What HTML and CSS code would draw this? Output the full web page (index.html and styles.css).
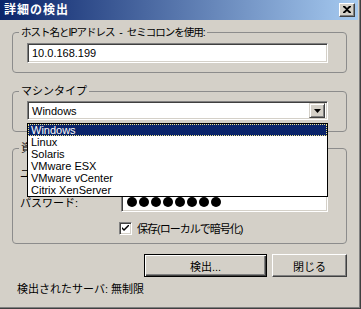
FILE: index.html
```html
<!DOCTYPE html>
<html lang="ja">
<head>
    <meta charset="UTF-8">
    <title>詳細の検出</title>
    <link rel="stylesheet" href="styles.css">
</head>
<body>
    <div class="window">
        <!-- Title bar -->
        <div class="titlebar">
            <span class="title">詳細の検出</span>
            <span class="close-btn">
                <svg width="8" height="7" viewBox="0 0 8 7"><path d="M0 0h2l2 2 2-2h2v1l-3 2.5 3 2.5v1h-2l-2-2-2 2h-2v-1l3-2.5-3-2.5z" fill="#000"/></svg>
            </span>
        </div>

        <div class="dialog-body">
            <fieldset class="group group-host">
                <legend>ホスト名とIPアドレス - セミコロンを使用:</legend>
                <div class="textbox">10.0.168.199</div>
            </fieldset>

            <fieldset class="group group-machine">
                <legend>マシンタイプ</legend>
                <div class="combo">
                    <span class="combo-value">Windows</span>
                    <span class="combo-btn">
                        <svg width="7" height="4" viewBox="0 0 7 4"><path d="M0 0h7l-3.5 4z" fill="#000"/></svg>
                    </span>
                </div>
            </fieldset>

            <fieldset class="group group-cred">
                <legend>資格情報</legend>
                <div class="field-row">
                    <span class="field-label">ユーザー名:</span>
                    <div class="textbox short"></div>
                </div>
                <div class="field-row">
                    <span class="field-label">パスワード:</span>
                    <div class="textbox short dots">
                        <span></span><span></span><span></span><span></span>
                        <span></span><span></span><span></span><span></span>
                    </div>
                </div>
                <div class="check-row">
                    <span class="checkbox">
                        <svg width="7" height="7" viewBox="0 0 7 7"><path d="M0 2l2 2 5-5v2l-5 5-2-2z" fill="#000"/></svg>
                    </span>
                    <span>保存(ローカルで暗号化)</span>
                </div>
            </fieldset>

            <div class="buttons">
                <span class="btn default">検出...</span>
                <span class="btn">閉じる</span>
            </div>

            <div class="status">検出されたサーバ: 無制限</div>

            <!-- Open combo list, drawn over the dialog -->
            <ul class="drop-list">
                <li class="selected">Windows</li>
                <li>Linux</li>
                <li>Solaris</li>
                <li>VMware ESX</li>
                <li>VMware vCenter</li>
                <li>Citrix XenServer</li>
            </ul>
        </div>
    </div>
</body>
</html>
```

FILE: styles.css
```css
body {
    margin: 0;
    padding: 0;
    font-family: "Liberation Sans", "Noto Sans CJK JP", sans-serif;
    font-size: 11px;
    color: #000;
    background: #d4d0c8;
}

.window {
    width: 361px;
    height: 309px;
    box-sizing: border-box;
    background: #d4d0c8;
    border-right: 1px solid #404040;
    border-bottom: 1px solid #404040;
    box-shadow: inset -1px -1px 0 #808080;
    display: flex;
    flex-direction: column;
}

/* Title bar */
.titlebar {
    height: 20px;
    margin-right: 2px;
    display: flex;
    align-items: center;
    justify-content: space-between;
    padding: 0 3px 0 4px;
    background: linear-gradient(to right, #0a246a, #a6caf0);
}

.title {
    color: #fff;
    font-weight: bold;
    font-size: 12px;
    letter-spacing: 1px;
    line-height: 14px;
}

.close-btn {
    width: 16px;
    height: 14px;
    box-sizing: border-box;
    background: #d4d0c8;
    border: 1px solid;
    border-color: #fff #404040 #404040 #fff;
    box-shadow: inset -1px -1px 0 #808080;
    display: flex;
    align-items: center;
    justify-content: center;
    padding-bottom: 1px;
}

.dialog-body {
    position: relative;
    flex: 1;
    padding: 6px 0 0 12px;
}

/* Group boxes */
.group {
    width: 335px;
    box-sizing: border-box;
    margin: 0;
    border: 1px solid #8c8c8c;
    border-radius: 4px;
    padding: 0 18px 0 14px;
}

.group legend {
    padding: 0 2px;
    margin-left: -8px;
    line-height: 13px;
}

.group-host {
    padding-top: 4px;
    padding-bottom: 9px;
}

.group-host legend {
    font-size: 10.5px;
    letter-spacing: -1px;
    word-spacing: 3px;
}

.group-machine {
    margin-top: 12px;
    padding-top: 3px;
    padding-bottom: 11px;
}

.group-cred {
    margin-top: 10px;
    padding-top: 4px;
    padding-bottom: 7px;
}

/* Text boxes */
.textbox {
    height: 20px;
    box-sizing: border-box;
    background: #fff;
    border: 1px solid;
    border-color: #808080 #fff #fff #808080;
    box-shadow: inset 1px 1px 0 #404040, inset -1px -1px 0 #d4d0c8;
    padding: 0 4px;
    line-height: 18px;
    font-size: 11px;
}

.textbox.short {
    width: 207px;
}

.combo {
    height: 19px;
    box-sizing: border-box;
    background: #fff;
    border: 1px solid;
    border-color: #808080 #fff #fff #808080;
    box-shadow: inset 1px 1px 0 #404040, inset -1px -1px 0 #d4d0c8;
    display: flex;
    align-items: center;
    justify-content: space-between;
    padding: 0 2px 0 4px;
}

.combo-btn {
    width: 16px;
    height: 15px;
    box-sizing: border-box;
    background: #d4d0c8;
    border: 1px solid;
    border-color: #d4d0c8 #404040 #404040 #d4d0c8;
    box-shadow: inset 1px 1px 0 #fff, inset -1px -1px 0 #808080;
    display: flex;
    align-items: center;
    justify-content: center;
}

/* Credential rows */
.field-row {
    display: flex;
    align-items: center;
    justify-content: space-between;
    margin-left: -7px;
    margin-top: 9px;
}

.field-row:first-of-type {
    margin-top: 4px;
}

.dots {
    display: flex;
    align-items: center;
    gap: 2px;
    padding-left: 5px;
}

.dots span {
    width: 10px;
    height: 10px;
    border-radius: 50%;
    background: #000;
}

.check-row {
    display: flex;
    align-items: center;
    gap: 5px;
    margin: 8px 0 0 92px;
    letter-spacing: -1px;
}

.checkbox {
    width: 13px;
    height: 13px;
    box-sizing: border-box;
    background: #fff;
    border: 1px solid;
    border-color: #808080 #fff #fff #808080;
    box-shadow: inset 1px 1px 0 #404040, inset -1px -1px 0 #d4d0c8;
    display: flex;
    align-items: center;
    justify-content: center;
}

/* Buttons */
.buttons {
    display: flex;
    gap: 5px;
    margin: 10px 0 0 132px;
}

.btn {
    width: 75px;
    height: 23px;
    box-sizing: border-box;
    border: 1px solid;
    border-color: #fff #404040 #404040 #fff;
    box-shadow: inset -1px -1px 0 #808080;
    display: flex;
    align-items: center;
    justify-content: center;
}

.btn.default {
    width: 123px;
    border: 1px solid #000;
    box-shadow: inset 1px 1px 0 #fff, inset -1px -1px 0 #404040, inset -2px -2px 0 #808080;
}

.status {
    margin: 5px 0 0 5px;
    line-height: 14px;
}

/* Open drop-down list */
.drop-list {
    position: absolute;
    left: 27px;
    top: 103px;
    width: 301px;
    box-sizing: border-box;
    margin: 0;
    padding: 0;
    list-style: none;
    background: #fff;
    border: 1px solid #000;
}

.drop-list li {
    height: 12px;
    line-height: 12px;
    padding-left: 3px;
}

.drop-list li.selected {
    background: #0a246a;
    color: #fff;
    outline: 1px dotted #f0e68c;
    outline-offset: -1px;
}
```
